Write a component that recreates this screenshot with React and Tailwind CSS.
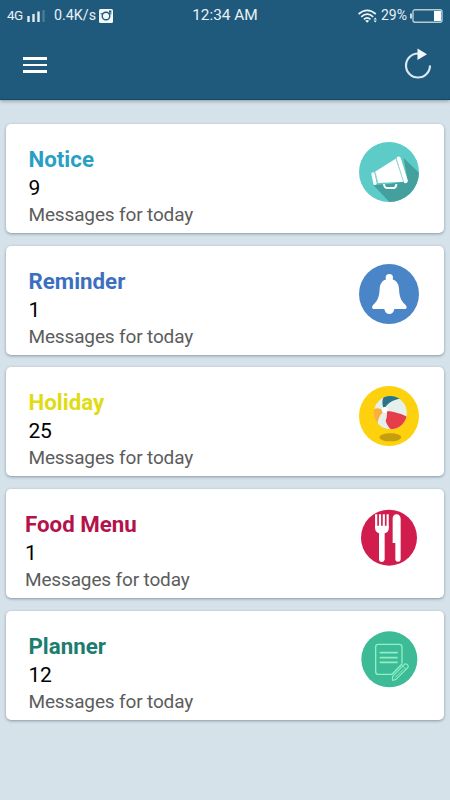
function MegaphoneIcon() {
  return (
    <svg viewBox="0 0 180 180" className="w-[60px] h-[60px]">
      <clipPath id="notice-clip">
        <circle cx="90" cy="90" r="90" />
      </clipPath>
      <circle cx="90" cy="90" r="90" fill="#5dcbc8" />
      <path d="M134 48L200 112V200H110L43 129L90 126L146 118Z" fill="#44a09d" clipPath="url(#notice-clip)" />
      <path d="M48 89L110 50L134 119L57 123Z" fill="#fff" />
      <path d="M42 96L48 124" stroke="#fff" strokeWidth="10" strokeLinecap="round" />
      <path d="M119 50L140 117" stroke="#fff" strokeWidth="13" strokeLinecap="round" />
      <path d="M111 48L134 120M49 92L56 124" stroke="#8ed6d3" strokeWidth="2.5" />
      <path d="M75 126Q76 138 84 138H105Q112 136 112 126" fill="none" stroke="#fff" strokeWidth="6" />
    </svg>
  );
}

function BellIcon() {
  return (
    <svg viewBox="0 0 180 180" className="w-[60px] h-[60px]">
      <circle cx="90" cy="90" r="90" fill="#4a86c7" />
      <circle cx="91" cy="41" r="11" fill="#fff" />
      <path
        d="M91 44C72 45 63 57 62 74C61 94 58 108 43 122C37 128 39 135 46 135H136C144 135 145 128 139 122C124 108 121 94 120 74C119 57 110 45 91 44Z"
        fill="#fff"
      />
      <path d="M76 134C78 155 104 155 106 134Z" fill="#fff" />
    </svg>
  );
}

function BeachBallIcon() {
  return (
    <svg viewBox="0 0 180 180" className="w-[60px] h-[60px]">
      <clipPath id="ball-clip">
        <circle cx="94" cy="80" r="50" />
      </clipPath>
      <circle cx="90" cy="90" r="90" fill="#fdd10d" />
      <ellipse cx="94" cy="154" rx="33" ry="12" fill="#c59e10" />
      <g clipPath="url(#ball-clip)">
        <circle cx="94" cy="80" r="50" fill="#e5f0ed" />
        <path d="M73 66C68 51 70 38 77 28L105 27L126 38C104 40 89 49 77 66Z" fill="#2b7386" />
        <path d="M83 75C103 76 124 82 146 93L128 128L96 130C88 124 82 112 80 104C84 95 85 85 83 75Z" fill="#e63d4c" />
        <path d="M72 73C62 66 53 65 44 70L40 100L55 115C57 100 62 87 72 79Z" fill="#fbb03b" />
      </g>
      <circle cx="77" cy="72" r="9" fill="#fff" />
    </svg>
  );
}

function CutleryIcon() {
  return (
    <svg viewBox="0 -2 180 180" className="w-[60px] h-[60px]">
      <circle cx="90" cy="90" r="84" fill="#d11c4e" />
      <path d="M51.5 20V62M63 20V62M74.5 20V62M86 20V62" stroke="#fff" strokeWidth="6.5" />
      <path d="M48.3 54H89.2V62C89.2 72 84 75 77 77V156Q75 163 68 163Q61 163 60 156V77C53 75 48.3 71 48.3 62Z" fill="#fff" />
      <path d="M101 34C101 24 107 20 113 20C119 20 125 25 125 34V155C125 165 109 165 109 155V106H101Z" fill="#fff" />
    </svg>
  );
}

function NotepadIcon() {
  return (
    <svg viewBox="0 -2 180 180" className="w-[60px] h-[60px]">
      <circle cx="91" cy="89" r="84" fill="#3dbb97" />
      <g fill="none" stroke="#8ff0c4" strokeLinecap="round" strokeLinejoin="round">
        <path d="M129 100V52Q129 44 121 44H57Q50 44 50 52V126Q50 134 58 134H99L129 103" strokeWidth="4" />
        <path d="M64 69H114M64 84H114M64 98H114" strokeWidth="5" />
        <path d="M101 140L136 104Q140 101 145 105Q150 110 146 114L111 149L101 152Q99 150 101 140Z" strokeWidth="3.5" />
        <path d="M131 109L141 119M109 143L132 120" strokeWidth="3" />
      </g>
    </svg>
  );
}

const cards = [
  { title: 'Notice', count: 9, color: 'text-[#2a9fc4]', pad: 'pl-[22.5px]', Icon: MegaphoneIcon },
  { title: 'Reminder', count: 1, color: 'text-[#3d6fbf]', pad: 'pl-[22.5px]', Icon: BellIcon },
  { title: 'Holiday', count: 25, color: 'text-[#dfdb14]', pad: 'pl-[22.5px]', Icon: BeachBallIcon },
  { title: 'Food Menu', count: 1, color: 'text-[#b3124a]', pad: 'pl-[19px]', Icon: CutleryIcon },
  { title: 'Planner', count: 12, color: 'text-[#1b7d6e]', pad: 'pl-[22.5px]', Icon: NotepadIcon },
];

function StatusBar() {
  return (
    <div className="grid grid-cols-[1fr_auto_1fr] items-center h-[31px] pl-[7px] pr-[7px] text-[#e8f1f6]">
      <div className="flex items-center">
        <span className="w-4 text-[13.5px] tracking-[-0.6px]">4G</span>
        <svg viewBox="0 0 18 12" className="w-[18px] h-3 ml-[4px]">
          <path d="M1.5 6V12M6.5 4V12M11.5 1.5V12" stroke="#e0ebf1" strokeWidth="2.4" />
          <path d="M16.5 0V12" stroke="#4a7c99" strokeWidth="2.4" />
        </svg>
        <span className="text-[14.3px] ml-[9px]">0.4K/s</span>
        <svg viewBox="0 0 14 14" className="w-[14px] h-[14px] ml-[3px]">
          <rect width="14" height="14" rx="1.5" fill="#f2f8fb" />
          <path d="M1.5 4.8H4.2M9.8 4.8H12.5" stroke="#1f5a7c" strokeWidth="1" />
          <circle cx="7" cy="7" r="3.8" fill="none" stroke="#1f5a7c" strokeWidth="1.4" />
          <rect x="10" y="1.5" width="2.4" height="2.2" fill="#1f5a7c" />
        </svg>
      </div>
      <span className="text-[15.4px]">12:34 AM</span>
      <div className="flex items-center justify-end">
        <svg viewBox="0 0 20 14" className="w-5 h-[14px]">
          <g fill="none" stroke="#eef6fa" strokeWidth="1.7">
            <path d="M0.6 5Q9.2 -2.4 17.8 5" />
            <path d="M3.2 7.8Q9.2 2.6 15.2 7.8" />
            <path d="M5.9 10.4Q9.2 7.4 12.5 10.4" />
          </g>
          <path d="M9.2 13.8L7.2 11.8Q9.2 10.4 11.2 11.8Z" fill="#eef6fa" />
          <path d="M15.6 10.4L17.2 8.4L18.8 10.4ZM15.6 11.4L17.2 13.4L18.8 11.4Z" fill="#eef6fa" />
        </svg>
        <span className="text-[14px] ml-[3px]">29%</span>
        <svg viewBox="0 0 33 14" className="w-[33px] h-[14px] ml-[3px]">
          <rect x="3" y="0.8" width="29" height="12.4" rx="2" fill="none" stroke="#b5cbd2" strokeWidth="1.4" />
          <path d="M1 4.5V9.5" stroke="#dce9ee" strokeWidth="1.8" />
          <rect x="24" y="2" width="7" height="10" fill="#fff" />
        </svg>
      </div>
    </div>
  );
}

function Header() {
  return (
    <header className="h-[100px] bg-[#1f5a7c] border-b border-[#124767] shadow-[0_1px_4px_rgba(0,0,0,0.35)]">
      <StatusBar />
      <div className="flex items-center justify-between h-[68px] pl-[23px] pr-[18px]">
        <button className="flex flex-col gap-[4px]">
          <span className="block w-6 h-[2.7px] bg-white" />
          <span className="block w-6 h-[2.7px] bg-white" />
          <span className="block w-6 h-[2.7px] bg-white" />
        </button>
        <button>
          <svg viewBox="0 0 28 32" className="block w-7 h-8 mb-[3px]">
            <path d="M14 5.5A12 12 0 1 0 26 17.5" fill="none" stroke="#d9e8f0" strokeWidth="2.2" />
            <path d="M13.5 0.5V12L23 6.2Z" fill="#f2f8fb" />
          </svg>
        </button>
      </div>
    </header>
  );
}

function MessageCard({ title, count, color, pad, Icon }) {
  return (
    <div className={`flex justify-between h-[109px] bg-white rounded-[5px] pr-[25px] shadow-[0_1px_3px_rgba(30,60,80,0.45)] ${pad}`}>
      <div className="pt-[21px]">
        <h2 className={`text-[22.3px] leading-[29px] font-bold ${color}`}>{title}</h2>
        <p className="text-[21px] leading-[28px] tracking-[-0.2px] text-black">{count}</p>
        <p className="text-[19px] leading-[26px] tracking-[-0.15px] text-[#5c5c5c]">Messages for today</p>
      </div>
      <div className="pt-[18.4px]">
        <Icon />
      </div>
    </div>
  );
}

export default function App() {
  return (
    <div className="w-full h-[800px] overflow-hidden bg-[#d6e2ea] font-['Roboto',sans-serif]">
      <Header />
      <main className="flex flex-col gap-[12.7px] px-[6px] pt-6">
        {cards.map((card) => (
          <MessageCard key={card.title} {...card} />
        ))}
      </main>
    </div>
  );
}
